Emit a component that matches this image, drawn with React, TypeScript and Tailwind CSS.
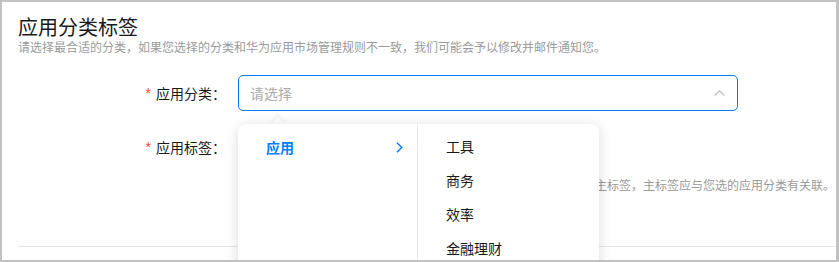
import React from "react"

const font = { fontFamily: '"Noto Sans CJK SC", "Noto Sans", sans-serif' }

const subCategories = ["工具", "商务", "效率", "金融理财"]

function ChevronUp() {
  return (
    <svg width="11" height="6" viewBox="0 0 11 6" fill="none">
      <polyline points="0.7,5.5 5.5,0.8 10.3,5.5" stroke="#bdbdbd" strokeWidth="1.2" />
    </svg>
  )
}

function ChevronRight() {
  return (
    <svg width="7" height="11" viewBox="0 0 7 11" fill="none">
      <polyline points="1,0.8 5.8,5.5 1,10.2" stroke="#007dff" strokeWidth="1.4" />
    </svg>
  )
}

function Label({ text }: { text: string }) {
  return (
    <div className="flex w-[208px] shrink-0 items-center justify-end text-[14px] text-[#191919]">
      <span className="mr-[5px] text-[14px] text-[#f5433b]" style={{ fontFamily: '"Liberation Sans", sans-serif' }}>
        *
      </span>
      <span>{text}</span>
    </div>
  )
}

export default function App() {
  return (
    <div className="h-[262px] w-[839px] bg-[#c2c2c2] pb-[2px] pl-[2px] pr-[3px] pt-[2px]" style={font}>
      <div className="relative flex h-full w-full flex-col overflow-hidden bg-white">
        <div className="px-[16px] pt-[12px]">
          <h1 className="text-[20px] leading-[26px] font-normal text-[#191919]">应用分类标签</h1>
          <p className="text-[12px] leading-[14px] text-[#9a9a9a]">
            请选择最合适的分类，如果您选择的分类和华为应用市场管理规则不一致，我们可能会予以修改并邮件通知您。
          </p>

          <div className="mt-[21px] flex items-center gap-[12px]">
            <Label text="应用分类：" />
            <div className="relative w-[500px]">
              <div className="flex h-[36px] items-center justify-between rounded-[5px] border border-[#007dff] pl-[11px] pr-[12px]">
                <span className="text-[14px] text-[#ababab]">请选择</span>
                <ChevronUp />
              </div>

              <div className="absolute left-0 top-[49px] z-10 w-[361px]">
                <div className="absolute left-[35px] top-[-5px] h-[10px] w-[10px] rotate-45 bg-white shadow-[-2px_-2px_4px_rgba(0,0,0,0.05)]" />
                <div className="relative flex h-[200px] rounded-t-[8px] bg-white shadow-[0_2px_14px_rgba(0,0,0,0.14)]">
                  <div className="w-[180px] shrink-0 border-r border-[#e8e8ee] pt-[6px]">
                    <div className="flex h-[34px] items-center justify-between pl-[28px] pr-[14px]">
                      <span className="text-[14px] font-semibold text-[#007dff]">应用</span>
                      <ChevronRight />
                    </div>
                  </div>
                  <div className="flex-1 pt-[5px]">
                    {subCategories.map((c) => (
                      <div key={c} className="flex h-[34px] items-center pl-[28px] text-[14px] text-[#191919]">
                        {c}
                      </div>
                    ))}
                  </div>
                </div>
              </div>
            </div>
          </div>

          <div className="mt-[18px] flex items-center gap-[12px]">
            <Label text="应用标签：" />
            <div className="h-[36px] w-[500px]" />
          </div>

          <div className="mt-[12px] pl-[229px] text-[12px] leading-[16px] whitespace-nowrap text-[#9a9a9a]">
            最多可选择三个标签，标签用于应用市场的搜索与推荐，第一个为主标签，主标签应与您选的应用分类有关联。
          </div>
        </div>

        <div className="ml-[16px] mt-[53px] h-px bg-[#e6e6e6]" />
      </div>
    </div>
  )
}
